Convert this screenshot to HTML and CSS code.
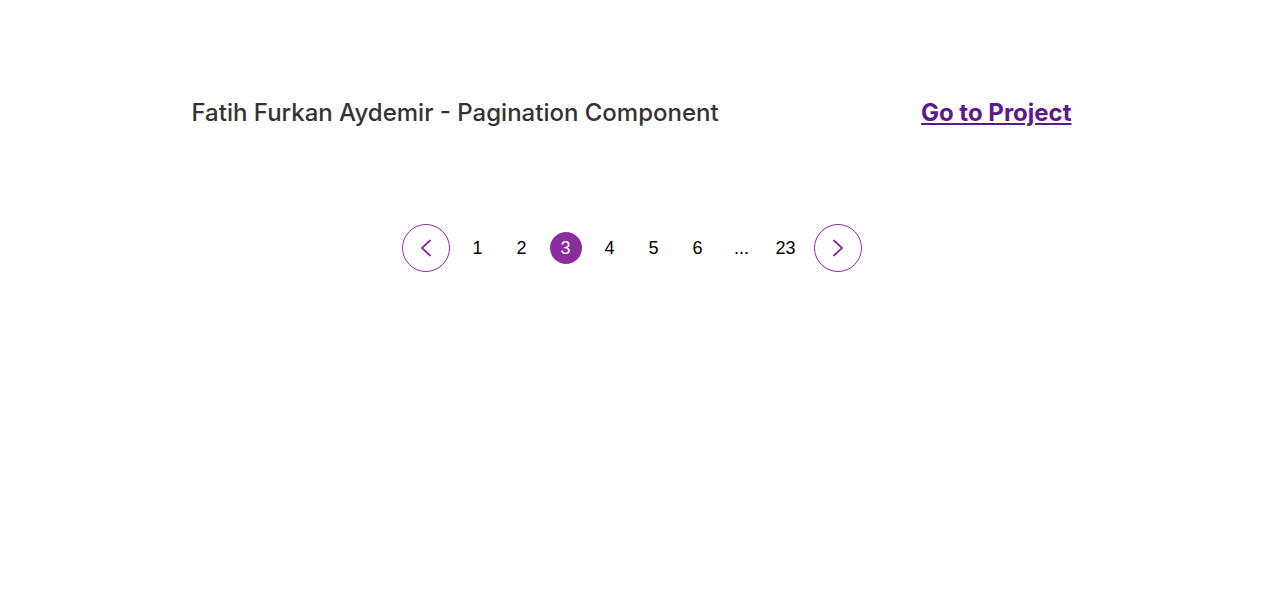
FILE: index.html
```html
<!DOCTYPE html>
<html>
<head>
<meta charset="utf-8">
<link rel="stylesheet" href="styles.css">
</head>
<body>
<div class="container">
  <header class="header">
    <h1 class="title">Fatih Furkan Aydemir - Pagination Component</h1>
    <a class="link" href="#">Go to Project</a>
  </header>
  <nav class="pagination">
    <button class="arrow" aria-label="Previous">
      <svg width="20" height="20" viewBox="0 0 20 20"><path d="M14 2.5 L6 10 L14 17.5" fill="none" stroke="#8a2e9e" stroke-width="1.8" stroke-linecap="round" stroke-linejoin="round"/></svg>
    </button>
    <span class="page">1</span>
    <span class="page">2</span>
    <span class="page active">3</span>
    <span class="page">4</span>
    <span class="page">5</span>
    <span class="page">6</span>
    <span class="page">...</span>
    <span class="page">23</span>
    <button class="arrow" aria-label="Next">
      <svg width="20" height="20" viewBox="0 0 20 20"><path d="M6 2.5 L14 10 L6 17.5" fill="none" stroke="#8a2e9e" stroke-width="1.8" stroke-linecap="round" stroke-linejoin="round"/></svg>
    </button>
  </nav>
</div>
</body>
</html>
```
FILE: styles.css
```css
html, body {
  margin: 0;
  padding: 0;
  background: #fff;
}
.container {
  width: 880px;
  margin: 0 auto;
  padding-top: 96px;
}
.header {
  display: flex;
  justify-content: space-between;
  align-items: center;
  height: 32px;
}
.title {
  margin: 0;
  font-family: Inter, "Noto Sans", sans-serif;
  font-weight: 500;
  font-size: 24px;
  color: #333;
}
.link {
  font-family: Inter, "Noto Sans", sans-serif;
  font-weight: 700;
  font-size: 24px;
  color: #5b1a8b;
  text-decoration: underline;
}
.pagination {
  display: flex;
  justify-content: center;
  align-items: center;
  gap: 12px;
  margin-top: 96px;
}
.arrow {
  width: 48px;
  height: 48px;
  border-radius: 50%;
  border: 1px solid #8a2e9e;
  background: #fff;
  display: flex;
  align-items: center;
  justify-content: center;
  padding: 0;
}
.page {
  width: 32px;
  height: 32px;
  border-radius: 50%;
  display: flex;
  align-items: center;
  justify-content: center;
  font-family: "Liberation Sans", Arial, sans-serif;
  font-size: 18px;
  color: #000;
}
.page.active {
  background: #8a2e9e;
  color: #fff;
}
```
